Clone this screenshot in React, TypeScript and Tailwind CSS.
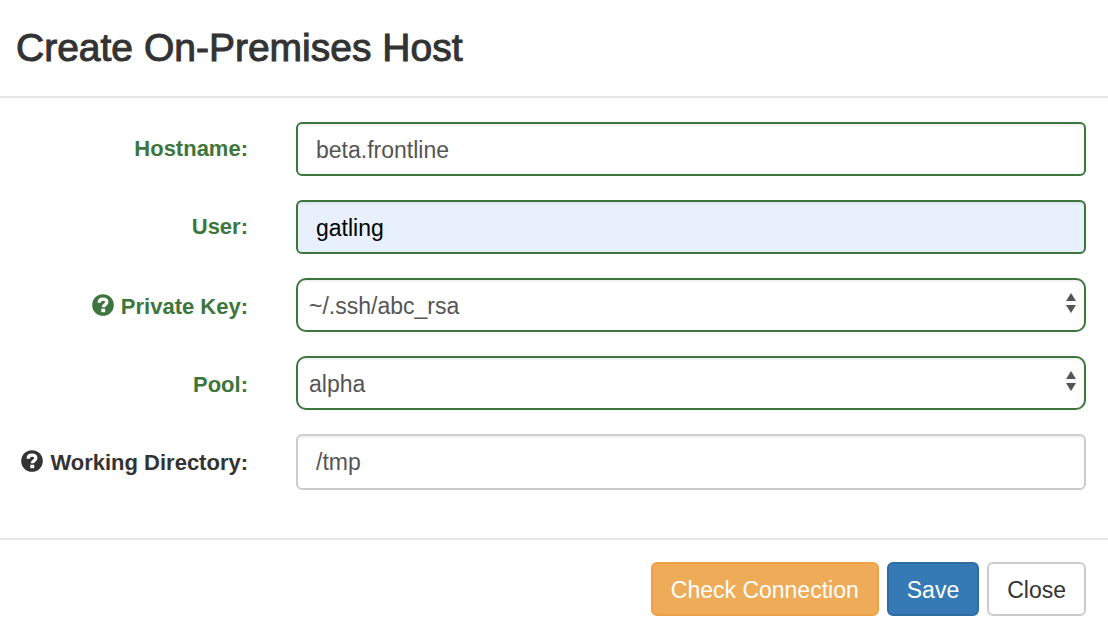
import { useId, type ReactNode } from "react";

const control =
  "block w-full border-2 text-[23px] outline-none shadow-[inset_0_2px_2px_rgba(0,0,0,0.06)]";

function HelpIcon() {
  return (
    <svg viewBox="0 0 22 22" className="size-[22px] shrink-0" aria-hidden>
      <circle cx="11" cy="11" r="10.8" fill="currentColor" />
      <path
        d="M7.2 8.8C7.2 6.2 8.700 5.200 11 5.200c2.300 0 3.800 1.100 3.800 3 0 2.500-3.500 2.300-3.500 5.100"
        fill="none"
        stroke="white"
        strokeWidth="3.3"
      />
      <path d="M9.300 14.700h3.900v3.500H9.300z" fill="white" />
    </svg>
  );
}

function Row({
  label,
  help,
  valid = true,
  low,
  children,
}: {
  label: string;
  help?: boolean;
  valid?: boolean;
  low?: boolean;
  children: (id: string) => ReactNode;
}) {
  const id = useId();
  return (
    <div className="grid grid-cols-[248px_1fr] items-start gap-12">
      <label
        htmlFor={id}
        className={`flex items-start justify-end gap-[7px] text-[22px] leading-8 font-bold whitespace-nowrap ${low ? "pt-[13px]" : "pt-[11px]"} ${valid ? "text-[#3c763d]" : "text-[#333333]"}`}
      >
        {help && (
          <span className="pt-[3px]">
            <HelpIcon />
          </span>
        )}
        {label}
      </label>
      {children(id)}
    </div>
  );
}

function Select({ id, value }: { id: string; value: string }) {
  return (
    <div className="relative">
      <select
        id={id}
        defaultValue={value}
        className={`${control} h-[54px] appearance-none rounded-[10px] border-[#3c763d] bg-white pt-0.5 pr-8 pl-[11px] text-[#555555]`}
      >
        <option>{value}</option>
      </select>
      <svg
        viewBox="0 0 10 20"
        className="pointer-events-none absolute top-[15px] right-[10px] h-5 w-[10px] fill-[#555555]"
        aria-hidden
      >
        <path d="M5 0 10 8H0zM0 12h10l-5 8z" />
      </svg>
    </div>
  );
}

export default function App() {
  return (
    <form
      className="bg-white font-['Liberation_Sans',Arial,sans-serif]"
      onSubmit={(e) => e.preventDefault()}
    >
      <header className="border-b-2 border-[#e5e5e5] px-4 py-6">
        <h1 className="text-[39px] leading-12 font-medium text-[#333333] [-webkit-text-stroke:1px_#333333]">
          Create On-Premises Host
        </h1>
      </header>
      <main className="flex flex-col gap-6 pt-6 pr-[22px] pb-12">
        <Row label="Hostname:">
          {(id) => (
            <input
              id={id}
              type="text"
              defaultValue="beta.frontline"
              className={`${control} h-[54px] rounded-md border-[#3c763d] bg-white px-[18px] pt-0.5 text-[#555555]`}
            />
          )}
        </Row>
        <Row label="User:">
          {(id) => (
            <input
              id={id}
              type="text"
              defaultValue="gatling"
              className={`${control} h-[54px] rounded-md border-[#3c763d] bg-[#e8f0fe] px-[18px] pt-0.5 text-black`}
            />
          )}
        </Row>
        <Row label="Private Key:" help low>
          {(id) => <Select id={id} value="~/.ssh/abc_rsa" />}
        </Row>
        <Row label="Pool:" low>
          {(id) => <Select id={id} value="alpha" />}
        </Row>
        <Row label="Working Directory:" help valid={false} low>
          {(id) => (
            <input
              id={id}
              type="text"
              defaultValue="/tmp"
              className={`${control} h-14 rounded-md border-[#cccccc] bg-white px-[18px] text-[#555555]`}
            />
          )}
        </Row>
      </main>
      <footer className="flex justify-end gap-2 border-t-2 border-[#e5e5e5] pt-[22px] pr-[22px] pb-3 text-[23px] leading-8">
        <button
          type="button"
          className="h-[54px] rounded-md border-2 border-[#eda245] bg-[#efac58] px-[18px] pt-0.5 text-white"
        >
          Check Connection
        </button>
        <button
          type="submit"
          className="h-[54px] rounded-md border-2 border-[#2e6da4] bg-[#367ab5] px-[18px] pt-0.5 text-white"
        >
          Save
        </button>
        <button
          type="button"
          className="h-[54px] rounded-md border-2 border-[#cccccc] bg-white px-[18px] pt-0.5 text-[#333333]"
        >
          Close
        </button>
      </footer>
    </form>
  );
}
